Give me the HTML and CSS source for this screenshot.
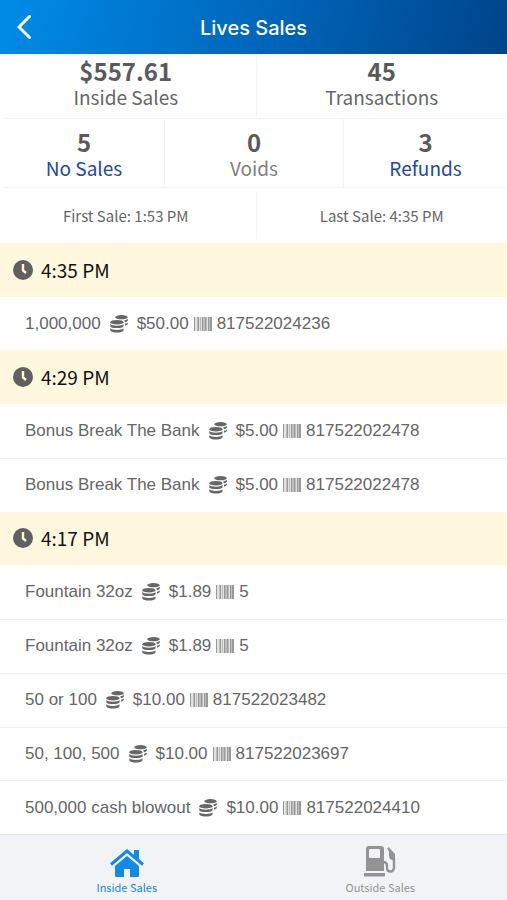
FILE: index.html
```
<!DOCTYPE html>
<html lang="en">
<head>
<meta charset="utf-8">
<meta name="viewport" content="width=device-width, initial-scale=1">
<title>Lives Sales</title>
<link rel="stylesheet" href="styles.css">
</head>
<body>
<svg class="sprite" aria-hidden="true">
  <symbol id="clock" viewBox="0 0 20 20">
    <circle cx="10" cy="10" r="10" fill="currentColor"/>
    <path d="M10 4v6.500l3 2.500" fill="none" stroke="#fff7de" stroke-width="2.400"/>
  </symbol>
  <symbol id="coins" viewBox="0 0 18 18">
    <g fill="currentColor">
      <ellipse cx="11.500" cy="2.200" rx="6.300" ry="2.100"/>
      <path d="M14.200 5.400q2.500-.5 3.600-1.600v1.900q-.8 1.200-2.800 1.600zM15 8.800q1.800-.4 2.800-1.400v1.700q-.8 1.200-2.800 1.600z"/>
      <ellipse cx="6.900" cy="7.200" rx="6.600" ry="2.300"/>
      <path d="M.3 9q1.600 1.700 6.600 1.700T13.500 9v2.400q-1.600 1.700-6.600 1.700T.3 11.400zM.3 13.200q1.600 1.700 6.600 1.700t6.600-1.700v2.300q-1.600 2-6.600 2t-6.600-2z"/>
    </g>
  </symbol>
  <symbol id="barcode" viewBox="0 0 18 14">
    <path fill="#e2e2e2" d="M0 0h18v14H0z"/>
    <path fill="#999" d="M0 0h1v14H0zM4 0h1v14H4zM8 0h1v14H8zM11 0h1v14h-1zM14 0h1v14h-1zM16 0h2v14h-2z"/>
    <path fill="#bdbdbd" d="M3 0h1v14H3zM6 0h1v14H6zM9 0h2v14H9zM12 0h1v14h-1zM15 0h1v14h-1z"/>
  </symbol>
</svg>

<header class="topbar">
  <button class="back" type="button" aria-label="Back">
    <svg viewBox="0 0 14 24" width="14" height="24"><path d="M12.500 1.500L2 12l10.500 10.500" fill="none" stroke="currentColor" stroke-width="3" stroke-linecap="round"/></svg>
  </button>
  <h1 class="title">Lives Sales</h1>
</header>

<main class="content">
  <section class="summary">
    <div class="stats totals">
      <div class="stat"><strong>$557.61</strong><span>Inside Sales</span></div>
      <div class="stat"><strong>45</strong><span>Transactions</span></div>
    </div>
    <div class="stats counts">
      <div class="stat"><strong>5</strong><a href="#no-sales">No Sales</a></div>
      <div class="stat muted"><strong>0</strong><span>Voids</span></div>
      <div class="stat"><strong>3</strong><a href="#refunds">Refunds</a></div>
    </div>
    <div class="stats times">
      <div class="stat">First Sale: 1:53 PM</div>
      <div class="stat">Last Sale: 4:35 PM</div>
    </div>
  </section>

  <section class="sales">
    <h2 class="time"><svg class="clock"><use href="#clock"/></svg>4:35 PM</h2>
    <div class="sale"><span>1,000,000</span><svg class="coins"><use href="#coins"/></svg><span>$50.00</span><svg class="barcode"><use href="#barcode"/></svg><span>817522024236</span></div>
    <h2 class="time"><svg class="clock"><use href="#clock"/></svg>4:29 PM</h2>
    <div class="sale"><span>Bonus Break The Bank</span><svg class="coins"><use href="#coins"/></svg><span>$5.00</span><svg class="barcode"><use href="#barcode"/></svg><span>817522022478</span></div>
    <div class="sale"><span>Bonus Break The Bank</span><svg class="coins"><use href="#coins"/></svg><span>$5.00</span><svg class="barcode"><use href="#barcode"/></svg><span>817522022478</span></div>
    <h2 class="time"><svg class="clock"><use href="#clock"/></svg>4:17 PM</h2>
    <div class="sale"><span>Fountain 32oz</span><svg class="coins"><use href="#coins"/></svg><span>$1.89</span><svg class="barcode"><use href="#barcode"/></svg><span>5</span></div>
    <div class="sale"><span>Fountain 32oz</span><svg class="coins"><use href="#coins"/></svg><span>$1.89</span><svg class="barcode"><use href="#barcode"/></svg><span>5</span></div>
    <div class="sale"><span>50 or 100</span><svg class="coins"><use href="#coins"/></svg><span>$10.00</span><svg class="barcode"><use href="#barcode"/></svg><span>817522023482</span></div>
    <div class="sale"><span>50, 100, 500</span><svg class="coins"><use href="#coins"/></svg><span>$10.00</span><svg class="barcode"><use href="#barcode"/></svg><span>817522023697</span></div>
    <div class="sale"><span>500,000 cash blowout</span><svg class="coins"><use href="#coins"/></svg><span>$10.00</span><svg class="barcode"><use href="#barcode"/></svg><span>817522024410</span></div>
  </section>
</main>

<nav class="tabs">
  <a class="tab active" href="#inside">
    <svg viewBox="0 0 36 28" width="36" height="28" fill="currentColor"><path d="M18 7l12 10v9.500q0 1.500-1.500 1.500H21v-8h-6v8H7.500Q6 28 6 26.500V17z"/><path d="M2 15.500L18 2l16 13.500" fill="none" stroke="currentColor" stroke-width="3"/><path d="M25 1h5v11l-5-4z"/></svg>
    <span>Inside Sales</span>
  </a>
  <a class="tab" href="#outside">
    <svg viewBox="0 0 32 32" width="32" height="32" fill="currentColor"><path fill-rule="evenodd" d="M5 1h12q3 0 3 3v22H2V4q0-3 3-3zm0 4v7q0 1 1 1h9q1 0 1-1V5q0-1-1-1H6Q5 4 5 5z"/><path d="M0 28h21v3.500H0z"/><path d="M19 17q4 0 4 4v2q0 3.500 3.200 3.500T30 23v-9l-1-5-5-6" fill="none" stroke="currentColor" stroke-width="2.400"/><path d="M24 2l7 7v7q-6-1-6-5V7z"/></svg>
    <span>Outside Sales</span>
  </a>
</nav>
</body>
</html>
```
FILE: styles.css
```
* { box-sizing: border-box; }

body {
  margin: 0;
  min-height: 100vh;
  display: flex;
  flex-direction: column;
  background: #fff;
  color: #666;
  font-family: "Noto Sans CJK SC", "Noto Sans", sans-serif;
}

.sprite { display: none; }

.topbar {
  display: grid;
  grid-template-columns: 48px 1fr 48px;
  align-items: center;
  height: 54px;
  background: linear-gradient(105deg, #008ce8 0%, #0064b8 55%, #00448a 100%);
  color: #fff;
}

.back {
  display: flex;
  padding: 0 0 0 17px;
  border: 0;
  background: none;
  color: inherit;
}

.title {
  margin: 0;
  padding-top: 2px;
  text-align: center;
  font: 500 20px/28px Inter, sans-serif;
}

.content {
  flex: 1;
  display: flex;
  flex-direction: column;
}

.stats {
  display: grid;
  grid-auto-flow: column;
  margin-left: 4px;
  border-bottom: 1px solid #f4f4f4;
}

.totals, .times { grid-template-columns: 1fr 1fr; }
.counts { grid-template-columns: 160px 1fr 164px; }
.times { border: 0; padding: 4px 0; }

.stat {
  display: flex;
  flex-direction: column;
  align-items: center;
  justify-content: center;
  font-size: 19px;
  line-height: 26px;
}

.totals .stat:first-child, .times .stat:first-child { padding-right: 8px; }
.stat + .stat { border-left: 1px solid #f4f4f4; }
.stat strong { font-size: 24px; color: #5a5a5a; }
.totals .stat { height: 64px; padding-bottom: 4px; }
.counts .stat { height: 68px; padding-top: 4px; }
.times .stat { height: 47px; font-size: 15px; }
.stat.muted { color: #808080; }
.stat a { color: #2148a8; text-decoration: none; }

.sales {
  flex: 1;
  display: grid;
  grid-auto-rows: minmax(48px, 1fr);
}

.time {
  display: flex;
  align-items: center;
  gap: 8px;
  margin: 0;
  padding: 0 13px;
  background: #fff7de;
  color: #111;
  font-size: 19px;
  font-weight: 400;
  line-height: 26px;
}

.clock { width: 20px; height: 20px; color: #606060; }

.sale {
  display: flex;
  align-items: center;
  padding: 0 25px;
  font: 17px/24px "Liberation Sans", Arial, sans-serif;
}

.sale + .sale { border-top: 1px solid #eee; }
.coins { width: 18px; height: 18px; margin: 0 9px; }
.barcode { width: 18px; height: 14px; margin: 0 5px; }

.tabs {
  display: grid;
  grid-template-columns: 1fr 1fr;
  height: 66px;
  border-top: 1px solid #e4e6e8;
  background: #f1f3f6;
}

.tab {
  display: flex;
  flex-direction: column;
  align-items: center;
  justify-content: flex-end;
  padding-bottom: 5px;
  color: #939393;
  font-size: 11px;
  line-height: 16px;
  gap: 2px;
  text-decoration: none;
}

.tab.active { color: #138ae8; }
```
